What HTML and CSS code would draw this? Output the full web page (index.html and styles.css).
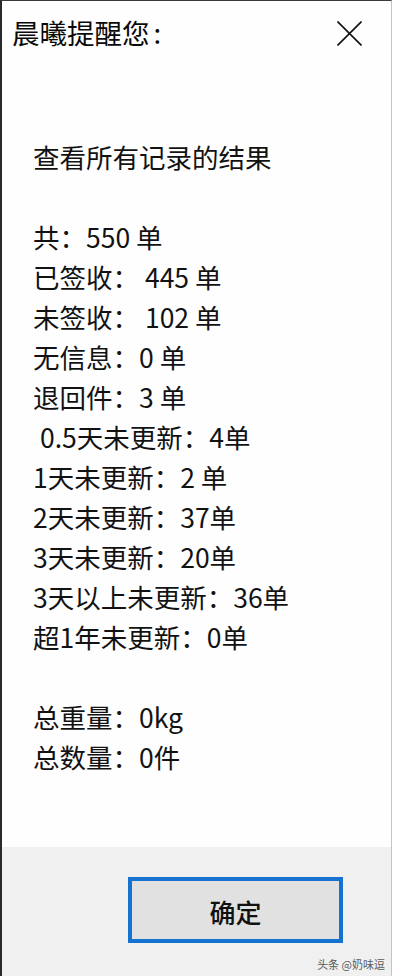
FILE: index.html
```html
<!DOCTYPE html>
<html lang="zh-CN">
<head>
<meta charset="utf-8">
<title>晨曦提醒您</title>
<link rel="stylesheet" href="styles.css">
</head>
<body>
<div class="window">
  <div class="titlebar">
    <div class="title">晨曦提醒您<span class="colon">:</span></div>
    <svg class="close" width="25" height="25" viewBox="0 0 25 25" aria-hidden="true">
      <path d="M0.5 0.5 L24.5 24.5 M24.5 0.5 L0.5 24.5" stroke="#111" stroke-width="1.6" fill="none"/>
    </svg>
  </div>
  <div class="content">
    <div class="line">查看所有记录的结果</div>
    <div class="line blank"></div>
    <div class="line">共：550 单</div>
    <div class="line">已签收： 445 单</div>
    <div class="line">未签收： 102 单</div>
    <div class="line">无信息：0 单</div>
    <div class="line">退回件：3 单</div>
    <div class="line indent">0.5天未更新：4单</div>
    <div class="line">1天未更新：2 单</div>
    <div class="line">2天未更新：37单</div>
    <div class="line">3天未更新：20单</div>
    <div class="line">3天以上未更新：36单</div>
    <div class="line">超1年未更新：0单</div>
    <div class="line blank"></div>
    <div class="line">总重量：0kg</div>
    <div class="line">总数量：0件</div>
  </div>
  <div class="footer">
    <button class="ok">确定</button>
    <div class="watermark">头条 @奶味逗</div>
  </div>
</div>
</body>
</html>
```

FILE: styles.css
```css
html, body {
  margin: 0;
  padding: 0;
  background: #ffffff;
}
body {
  width: 394px;
  height: 976px;
  overflow: hidden;
  font-family: "Noto Sans CJK SC", "Noto Sans", sans-serif;
}
.window {
  box-sizing: border-box;
  width: 392px;
  height: 976px;
  border-left: 2px solid #2a2a2a;
  border-top: 1px solid #3a3a3a;
  border-right: 1px solid #c4c4c4;
  display: flex;
  flex-direction: column;
  background: #fefefe;
}
.titlebar {
  display: flex;
  align-items: flex-start;
  justify-content: space-between;
  padding: 14px 29px 0 10px;
  height: 50px;
}
.title {
  font-size: 27.5px;
  line-height: 34px;
  color: #0a0a0a;
}
.colon {
  margin-left: 4px;
}
.close {
  display: block;
  margin-top: 6px;
}
.content {
  flex: 1;
  padding: 72px 0 0 31px;
  color: #121212;
  font-size: 26.5px;
}
.line {
  height: 40px;
  line-height: 40px;
  white-space: pre;
}
.indent {
  padding-left: 7px;
}
.footer {
  position: relative;
  height: 129px;
  background: #f0f0f0;
  display: flex;
  justify-content: flex-end;
  align-items: flex-start;
  padding: 30px 48px 0 0;
  box-sizing: border-box;
}
.ok {
  box-sizing: border-box;
  width: 215px;
  height: 66px;
  border: 4px solid #1672d0;
  background: #e1e1e1;
  font-family: "Noto Sans CJK SC", sans-serif;
  font-size: 26px;
  font-weight: 500;
  color: #111;
  padding: 0;
  padding-top: 2px;
}
.watermark {
  position: absolute;
  right: 6px;
  bottom: 5px;
  font-size: 11px;
  color: #5a5a5a;
  line-height: 14px;
}
```
